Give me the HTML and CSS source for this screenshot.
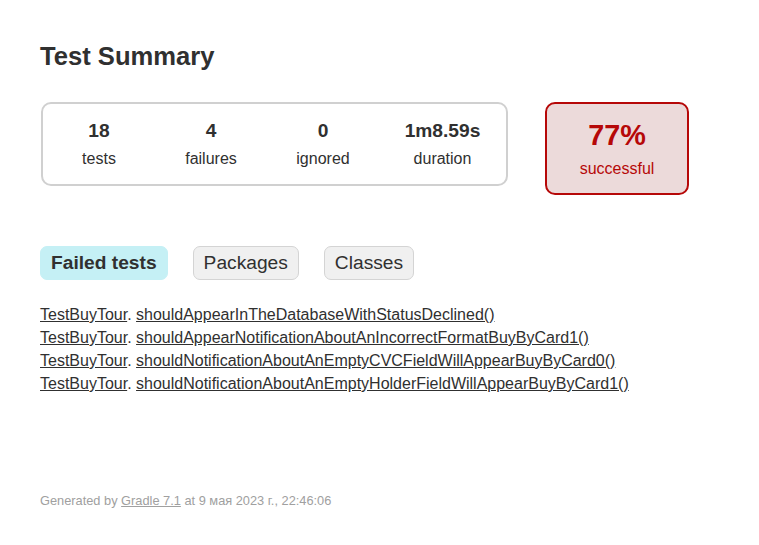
FILE: index.html
```html
<!DOCTYPE html>
<html>
<head>
<meta charset="utf-8">
<title>Test results - Test Summary</title>
<link rel="stylesheet" href="styles.css">
</head>
<body>
<div class="content">
  <h1 class="title">Test Summary</h1>
  <div class="summary">
    <div class="summary-group">
      <div class="info-box"><div class="counter">18</div><p class="label">tests</p></div>
      <div class="info-box"><div class="counter">4</div><p class="label">failures</p></div>
      <div class="info-box"><div class="counter">0</div><p class="label">ignored</p></div>
      <div class="info-box info-box-wide"><div class="counter">1m8.59s</div><p class="label">duration</p></div>
    </div>
    <div class="success-rate failures">
      <div class="percent">77%</div>
      <p class="label">successful</p>
    </div>
  </div>
  <ul class="tab-links">
    <li class="tab selected"><a href="#tab0">Failed tests</a></li>
    <li class="tab"><a href="#tab1">Packages</a></li>
    <li class="tab"><a href="#tab2">Classes</a></li>
  </ul>
  <ul class="link-list">
    <li><a href="#">TestBuyTour</a>. <a href="#">shouldAppearInTheDatabaseWithStatusDeclined()</a></li>
    <li><a href="#">TestBuyTour</a>. <a href="#">shouldAppearNotificationAboutAnIncorrectFormatBuyByCard1()</a></li>
    <li><a href="#">TestBuyTour</a>. <a href="#">shouldNotificationAboutAnEmptyCVCFieldWillAppearBuyByCard0()</a></li>
    <li><a href="#">TestBuyTour</a>. <a href="#">shouldNotificationAboutAnEmptyHolderFieldWillAppearBuyByCard1()</a></li>
  </ul>
  <div class="footer">
    <p class="footer-text">Generated by <a href="#">Gradle 7.1</a> at 9 мая 2023 г., 22:46:06</p>
  </div>
</div>
</body>
</html>
```

FILE: styles.css
```css
html, body {
  margin: 0;
  padding: 0;
  background: #ffffff;
}

body {
  font-family: "Liberation Sans", Arial, sans-serif;
  font-size: 16px;
  color: #303030;
}

a, a:visited {
  color: #303030;
}

.content {
  padding: 42px 50px 30px 40px;
}

.title {
  margin: 0;
  font-size: 25.6px;
  font-weight: bold;
  white-space: nowrap;
}

.summary {
  display: flex;
  align-items: flex-start;
  margin-top: 31px;
  margin-left: 1px;
}

.summary-group {
  display: flex;
  border: solid 2px #d0d0d0;
  border-radius: 10px;
  padding: 1px 0;
}

.info-box {
  width: 112px;
  padding: 15px 0;
  text-align: center;
}

.info-box-wide {
  width: 127px;
}

.label {
  margin: 0;
}

.counter {
  font-size: 19.2px;
  font-weight: bold;
  margin-bottom: 8px;
}

.success-rate {
  width: 140px;
  margin-left: 37px;
  padding: 15px 0;
  text-align: center;
  border: solid 2px #b60808;
  border-radius: 10px;
}

.failures {
  color: #b60808;
  background-color: #ecdada;
}

.percent {
  font-size: 28.8px;
  font-weight: bold;
  margin-bottom: 8px;
}

.tab-links {
  display: flex;
  list-style: none;
  margin: 51px 0 0 0;
  padding: 0;
  gap: 25px;
}

.tab {
  padding: 5px 10px;
  border: solid 1px #d4d4d4;
  border-radius: 7px;
  background-color: #f0f0f0;
}

.tab.selected {
  background-color: #c5f0f5;
  border-color: #c5f0f5;
}

.tab.selected a {
  font-weight: bold;
}

.tab a {
  display: block;
  font-size: 19.2px;
  text-decoration: none;
}

.link-list {
  list-style: none;
  padding: 0;
  margin: 26px 0 0 0;
}

.link-list li {
  margin-bottom: 5px;
}

.footer {
  margin-top: 100px;
  font-size: 12.8px;
  white-space: nowrap;
}

.footer-text {
  margin: 0;
}

.footer, .footer a, .footer a:visited {
  color: #a0a0a0;
}
```
